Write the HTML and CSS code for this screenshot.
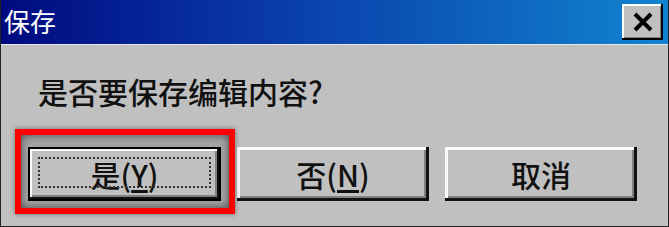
FILE: index.html
```html
<!DOCTYPE html>
<html lang="zh-CN">
<head>
  <meta charset="UTF-8" />
  <meta name="viewport" content="width=device-width, initial-scale=1.0" />
  <title>保存</title>
  <link rel="stylesheet" href="styles.css">
</head>
<body>
  <div class="ventana">
    <div class="barra-titulo">
      <span class="titulo">保存</span>
      <button class="cerrar" aria-label="关闭">
        <svg width="22" height="20" viewBox="0 0 22 20">
          <path d="M3 2 L19 18 M19 2 L3 18" stroke="#000" stroke-width="4" fill="none" />
        </svg>
      </button>
    </div>
    <div class="contenido">
      <p class="mensaje">是否要保存编辑内容?</p>
      <div class="botones">
        <div class="marca">
          <button class="boton defecto">是(<u>Y</u>)</button>
        </div>
        <button class="boton">否(<u>N</u>)</button>
        <button class="boton">取消</button>
      </div>
    </div>
  </div>
</body>
</html>
```

FILE: styles.css
```css
body {
  margin: 0;
  background: #c0c0c0;
  font-family: "Noto Sans CJK SC", "Liberation Sans", sans-serif;
}

.ventana {
  width: 669px;
  height: 227px;
  box-sizing: border-box;
  border-left: 1px solid #222;
  border-right: 1px solid #222;
  border-bottom: 1px solid #222;
  background: #c0c0c0;
  overflow: hidden;
}

.barra-titulo {
  height: 44px;
  display: flex;
  align-items: center;
  justify-content: space-between;
  padding: 0 5px 0 3px;
  background: linear-gradient(to right, #000a80, #0a3aa8 40%, #1084d0);
  border-bottom: 1px solid #e8e8e8;
}

.titulo {
  color: white;
  font-size: 26px;
  line-height: 1;
  margin-top: -2px;
}

.cerrar {
  width: 41px;
  height: 36px;
  padding: 0;
  border: none;
  background: #c0c0c0;
  display: flex;
  align-items: center;
  justify-content: center;
  box-shadow: inset -2px -2px #000, inset 2px 2px #fff, inset -3px -3px #808080;
}

.contenido {
  padding: 0 0 0 27px;
}

.mensaje {
  margin: 30px 0 0 10px;
  font-size: 30px;
  font-weight: 500;
  line-height: 32px;
  color: #111;
}

.botones {
  display: flex;
  gap: 16px;
  margin-top: 40px;
}

.boton {
  width: 192px;
  height: 54px;
  padding: 0;
  border: none;
  background: #c0c0c0;
  font-family: inherit;
  font-size: 30px;
  font-weight: 500;
  color: #111;
  box-shadow: inset -3px -3px #111, inset 3px 3px #fafafa, inset -5px -5px #808080;
}

.boton u {
  text-underline-offset: 3px;
}

.marca {
  position: relative;
}

.marca::before {
  content: "";
  position: absolute;
  left: -13px;
  top: -18px;
  right: -14px;
  bottom: -13px;
  border: 6px solid #ff0000;
  background: #a4a4a4;
  box-shadow: 0 0 5px rgba(0, 0, 0, 0.45), inset 0 0 8px rgba(0, 0, 0, 0.6);
}

.defecto {
  position: relative;
  width: 193px;
  border: 2px solid #000;
  box-shadow: inset -2px -2px #111, inset 2px 2px #fafafa, inset -4px -4px #808080;
}

.defecto::after {
  content: "";
  position: absolute;
  left: 8px;
  top: 8px;
  right: 8px;
  bottom: 11px;
  border: 2px dotted #333;
}
```
